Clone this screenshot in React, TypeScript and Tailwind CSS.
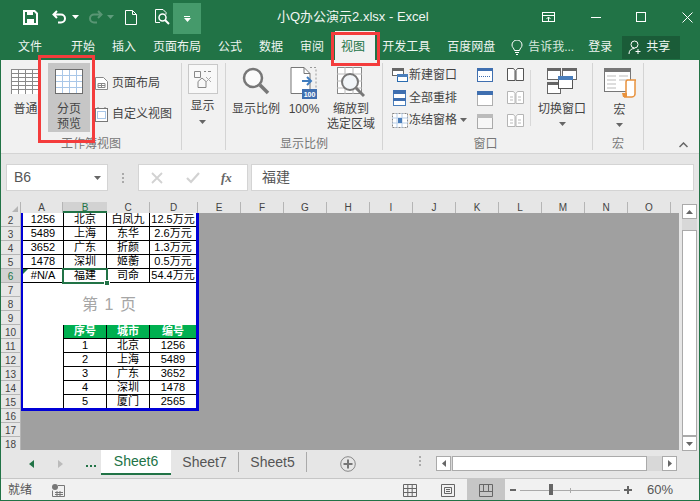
import React from 'react';

const UI = "font-['Liberation_Sans','Noto_Sans_CJK_SC',sans-serif]";

const rowsTop = [
  ['1256', '北京', '白凤九', '12.5万元'],
  ['5489', '上海', '东华', '2.6万元'],
  ['3652', '广东', '折颜', '1.3万元'],
  ['1478', '深圳', '姬蘅', '0.5万元'],
  ['#N/A', '福建', '司命', '54.4万元'],
];

const rowsBottom = [
  ['1', '北京', '1256'],
  ['2', '上海', '5489'],
  ['3', '广东', '3652'],
  ['4', '深圳', '1478'],
  ['5', '厦门', '2565'],
];

const tabs = ['开始', '插入', '页面布局', '公式', '数据', '审阅'];
const restCols = ['E', 'F', 'G', 'H', 'I', 'J', 'K', 'L', 'M', 'N', 'O'];
const rowNums = [2, 3, 4, 5, 6, 7, 8, 9, 10, 11, 12, 13, 14, 15, 16, 17, 18];

const Caret = ({ className = '' }: { className?: string }) => (
  <svg width="7" height="4" viewBox="0 0 7 4" className={className}>
    <path d="M0 0h7L3.5 4z" fill="#666" />
  </svg>
);

const SheetGrid = ({ w, h, line = '#8a8a8a' }: { w: number; h: number; line?: string }) => {
  const v = [];
  const l = [];
  for (let x = 0.5; x <= w; x += w / 4) v.push(x);
  for (let y = 0.5; y <= h; y += h / 6) l.push(y);
  return (
    <svg width={w + 1} height={h + 1}>
      <rect x="0" y="0" width={w + 1} height={h + 1} fill="#fff" />
      {v.map((x) => <line key={x} x1={x} x2={x} y1="0" y2={h + 1} stroke={line} />)}
      {l.map((y) => <line key={y} y1={y} y2={y} x1="0" x2={w + 1} stroke={line} />)}
    </svg>
  );
};

const BreakIcon = () => (
  <svg width="28" height="25" viewBox="0 0 28 25">
    <rect x="0.5" y="0.5" width="27" height="24" fill="#fff" stroke="#6d6d6d" />
    <path d="M0 6.5h28M0 12.5h28M0 18.5h28" stroke="#a9c7e8" />
    <path d="M7.5 0v25M14.5 0v25M21.5 0v25" stroke="#a9c7e8" />
    <path d="M0.5 0.5h27v24h-27z" fill="none" stroke="#6d6d6d" />
  </svg>
);

const WinIcon = ({ kind }: { kind: 'new' | 'all' | 'freeze' }) => {
  if (kind === 'new')
    return (
      <svg width="16" height="14" viewBox="0 0 16 14">
        <rect x="0.5" y="0.5" width="11" height="7" fill="#fff" stroke="#666" />
        <rect x="0" y="0" width="12" height="3" fill="#666" />
        <rect x="5.5" y="6.5" width="10" height="7" fill="#fff" stroke="#2b6cb0" />
        <rect x="5" y="6" width="11" height="3" fill="#4a7ebb" />
      </svg>
    );
  if (kind === 'all')
    return (
      <svg width="13" height="16" viewBox="0 0 13 16">
        <rect x="0.5" y="0.5" width="12" height="15" fill="#fff" stroke="#4a7ebb" />
        <rect x="0" y="0" width="13" height="4" fill="#3f6fb0" />
        <rect x="0" y="8" width="13" height="3" fill="#3f6fb0" />
      </svg>
    );
  return (
    <svg width="16" height="15" viewBox="0 0 16 15">
      <rect x="0.5" y="0.5" width="15" height="14" fill="#fff" stroke="#888" strokeDasharray="2 1" />
      <path d="M0 5h16M0 10h16M5 0v15M10 0v15" stroke="#b9cfe8" />
      <rect x="6" y="5" width="4" height="5" fill="#4a7ebb" />
    </svg>
  );
};

const SmallWin = ({ kind }: { kind: 'a' | 'b' | 'c' }) => (
  <svg width="16" height="15" viewBox="0 0 16 15">
    {kind === 'a' && (
      <>
        <rect x="0.5" y="0.5" width="15" height="13" fill="#fff" stroke="#3f6fb0" />
        <rect x="0" y="0" width="16" height="3" fill="#3f6fb0" />
        <path d="M2 8.5h12" stroke="#3f6fb0" strokeDasharray="1 1" />
      </>
    )}
    {kind === 'b' && (
      <>
        <rect x="0.5" y="1.5" width="15" height="13" fill="#fff" stroke="#666" strokeDasharray="1 1" />
        <rect x="0" y="0" width="16" height="4" fill="#3f6fb0" />
      </>
    )}
    {kind === 'c' && (
      <>
        <rect x="0.5" y="0.5" width="15" height="14" fill="#f7f7f7" stroke="#aaa" />
        <rect x="0" y="0" width="16" height="4" fill="#bbb" />
      </>
    )}
  </svg>
);

const TwoPages = ({ dim = false, mid = false }: { dim?: boolean; mid?: boolean }) => (
  <svg width="17" height="13" viewBox="0 0 17 13">
    <path d="M0.5 0.5h6l1.5 2v10h-7.5z M9 2.5l1.5-2h6v12H9z" fill="#fff" stroke={dim ? '#b5b5b5' : '#555'} />
    {mid && <path d="M3 6h3M11 6h3M3 9h3M11 9h3" stroke="#bbb" />}
  </svg>
);

const MenuTab = ({ label }: { label: string }) => <span className="whitespace-nowrap">{label}</span>;

const BigLabel = ({ children, className = '' }: { children: React.ReactNode; className?: string }) => (
  <div className={`text-[12px] leading-[15px] text-[#444] text-center whitespace-nowrap ${className}`}>{children}</div>
);

const GroupLabel = ({ children, className = '' }: { children: React.ReactNode; className?: string }) => (
  <div className={`h-[16px] shrink-0 leading-[16px] text-[12px] text-[#777] text-center whitespace-nowrap ${className}`}>{children}</div>
);

export default function App() {
  return (
    <div className={`${UI} relative w-[700px] h-[501px] overflow-hidden bg-[#e6e6e6] flex flex-col`}>
      {/* title bar */}
      <div className="h-[34px] shrink-0 bg-[#217346] flex items-center text-white relative">
        <svg width="15" height="15" viewBox="0 0 15 15" className="ml-[23px]">
          <path d="M1 1h10.5L14 3.5V14H1z" fill="none" stroke="#fff" strokeWidth="2" />
          <rect x="4" y="1" width="6" height="4" fill="#fff" />
          <rect x="4" y="9" width="7" height="5" fill="#fff" />
        </svg>
        <svg width="15" height="14" viewBox="0 0 15 14" className="ml-[14px]">
          <path d="M5 1L1.5 4.5 5 8M2 4.5h7a4 4 0 0 1 0 8H6" fill="none" stroke="#fff" strokeWidth="2" />
        </svg>
        <Caret className="ml-[5px] [&>path]:fill-white" />
        <svg width="15" height="14" viewBox="0 0 15 14" className="ml-[9px] opacity-25">
          <path d="M10 1l3.5 3.5L10 8M13 4.5H6a4 4 0 0 0 0 8h3" fill="none" stroke="#fff" strokeWidth="2" />
        </svg>
        <Caret className="ml-[4px] [&>path]:fill-[#5f9c7c]" />
        <svg width="12" height="15" viewBox="0 0 12 15" className="ml-[11px]">
          <path d="M0.5 0.5h7l4 4v10h-11z M7.5 0.5v4h4" fill="none" stroke="#fff" />
        </svg>
        <svg width="16" height="16" viewBox="0 0 16 16" className="ml-[17px]">
          <path d="M9 0.5H1.5v13H6 M9 0.5l3 3v2" fill="none" stroke="#fff" />
          <circle cx="8.5" cy="8.5" r="3.5" fill="none" stroke="#fff" strokeWidth="1.5" />
          <path d="M11 11l4 4" stroke="#fff" strokeWidth="2" />
        </svg>
        <div className="ml-[3px] w-[28px] h-[31px] mt-[3px] bg-[#459a6b] flex flex-col items-center justify-center gap-[1px]">
          <div className="w-[6px] h-px bg-white" />
          <Caret className="[&>path]:fill-white" />
        </div>
        <span className="ml-[76px] text-[13px] text-[#f1f6f3] whitespace-nowrap">小Q办公演示2.xlsx - Excel</span>
        <svg width="14" height="11" viewBox="0 0 14 11" className="ml-[113px]">
          <rect x="0.5" y="0.5" width="12" height="9" fill="none" stroke="#fff" />
          <path d="M0 3.5h13M6.5 9V5M4.5 7l2-2 2 2" stroke="#fff" fill="none" />
        </svg>
        <div className="ml-[35px] w-[10px] h-px bg-white" />
        <div className="ml-[35px] w-[10px] h-[10px] border border-white" />
        <svg width="11" height="11" viewBox="0 0 11 11" className="ml-[36px]">
          <path d="M0.5 0.5l10 10M10.5 0.5l-10 10" stroke="#fff" />
        </svg>
      </div>

      {/* menu tabs */}
      <div className="h-[26px] shrink-0 bg-[#217346] flex items-center text-[12px] text-[#eef5f1] pl-[18px]">
        <span className="mr-[29px]">文件</span>
        <div className="flex items-center gap-[17px]">
          {tabs.map((t) => <MenuTab key={t} label={t} />)}
          <span className="relative z-0 text-[#217346]">
            <span className="absolute -z-10 left-[-6px] right-[-10px] top-[-7px] bottom-[-6px] bg-[#f1f1f1]" />
            视图
          </span>
          <MenuTab label="开发工具" />
          <MenuTab label="百度网盘" />
        </div>
        <svg width="12" height="15" viewBox="0 0 12 15" className="ml-[16px]">
          <path d="M3.5 10.5C3 8 1 7.5 1 5a5 5 0 0 1 10 0c0 2.500-2 3-2.500 5.500zM4 12.500h4M5 14.500h2" fill="none" stroke="#fff" />
        </svg>
        <span className="ml-[5px] whitespace-nowrap text-[#d8e8de]">告诉我...</span>
        <span className="ml-[14px]">登录</span>
        <div className="ml-[10px] w-[58px] h-[23px] bg-[#1a5c38] flex items-center pl-[6px] gap-[3px]">
          <svg width="15" height="15" viewBox="0 0 15 15">
            <circle cx="6.500" cy="4.500" r="3.500" fill="none" stroke="#fff" />
            <path d="M1 14c0-3.500 2-5.500 5.500-5.500M10 9v5M7.500 11.500h5" fill="none" stroke="#fff" />
          </svg>
          <span>共享</span>
        </div>
      </div>

      {/* ribbon */}
      <div className="h-[93px] shrink-0 bg-[#f1f1f1] flex pt-[3px] pl-[1px]">
        {/* 工作簿视图 */}
        <div className="w-[181px] h-[87px] border-r border-[#d4d4d4] flex flex-col">
          <div className="h-[73px] shrink-0 flex">
            <div className="ml-[9px] w-[31px] flex flex-col items-center pt-[6px]">
              <SheetGrid w={28} h={24} />
              <BigLabel className="mt-[8px]">普通</BigLabel>
            </div>
            <div className="ml-[7px] w-[42px] h-[69px] bg-[#c6c6c6] flex flex-col items-center pt-[6px]">
              <BreakIcon />
              <BigLabel className="mt-[8px]">分页<br />预览</BigLabel>
            </div>
            <div className="ml-[5px] flex flex-col text-[12px] text-[#444]">
              <div className="flex items-center h-[20px] mt-[10px] gap-[4px] whitespace-nowrap">
                <svg width="13" height="13" viewBox="0 0 13 13">
                  <path d="M0.5 0.5h8l4 4v8h-12z" fill="#fff" stroke="#888" />
                  <path d="M3 6.500h7v4H3zM6.500 6.500v4M3 8.500h7" fill="none" stroke="#888" />
                </svg>
                页面布局
              </div>
              <div className="flex items-center h-[20px] mt-[11px] gap-[4px] whitespace-nowrap">
                <svg width="13" height="15" viewBox="0 0 13 15">
                  <rect x="0.5" y="1.500" width="12" height="13" fill="#fff" stroke="#777" />
                  <rect x="2.500" y="4.500" width="8" height="7" fill="none" stroke="#a9c7e8" />
                  <path d="M3 0v2M10 0v2" stroke="#777" />
                </svg>
                自定义视图
              </div>
            </div>
          </div>
          <GroupLabel>工作簿视图</GroupLabel>
        </div>
        {/* 显示 */}
        <div className="w-[44px] h-[87px] border-r border-[#d4d4d4] flex flex-col items-center pr-[2px]">
          <div className="w-[30px] h-[30px] mt-[1px] bg-[#f8f8f8] border border-[#c8c8c8] flex items-center justify-center">
            <svg width="20" height="20" viewBox="0 0 20 20">
              <path d="M1.500 2.500h6v6h-6zM11 2.500h2M15 2.500h3M5 12.500l4-3.500 4 3.500v6H5z" fill="none" stroke="#888" />
              <path d="M13 8l5 5M18 8l-5 5" stroke="#aaa" />
            </svg>
          </div>
          <BigLabel className="mt-[5px]">显示</BigLabel>
          <Caret className="mt-[6px]" />
        </div>
        {/* 显示比例 */}
        <div className="w-[157px] h-[87px] border-r border-[#d4d4d4] flex flex-col">
          <div className="h-[73px] shrink-0 flex">
            <div className="ml-[5px] w-[50px] flex flex-col items-center pt-[4px]">
              <svg width="28" height="28" viewBox="0 0 28 28">
                <circle cx="11" cy="11" r="9" fill="#fbfbfb" stroke="#777" strokeWidth="2.500" />
                <path d="M18 18l8 8" stroke="#777" strokeWidth="3.500" />
              </svg>
              <BigLabel className="mt-[7px]">显示比例</BigLabel>
            </div>
            <div className="ml-[6px] w-[34px] flex flex-col items-center pt-[4px]">
              <svg width="28" height="32" viewBox="0 0 28 32">
                <path d="M1 0.500h13l6 6v20H1z" fill="#fff" stroke="#777" />
                <path d="M14 0.500v6h6" fill="none" stroke="#777" />
                <path d="M20 0.500h6v20" fill="none" stroke="#999" strokeDasharray="2 2" />
                <path d="M12 14h9M17 10l4 4-4 4" fill="none" stroke="#3f7cbf" strokeWidth="2" />
                <rect x="12" y="22" width="15" height="10" fill="#3f6fb0" />
                <text x="19.500" y="30" fontSize="7" fontWeight="700" fill="#fff" textAnchor="middle">100</text>
              </svg>
              <BigLabel className="mt-[3px]">100%</BigLabel>
            </div>
            <div className="ml-[5px] w-[50px] flex flex-col items-center pt-[4px]">
              <svg width="28" height="32" viewBox="0 0 28 32">
                <rect x="0.500" y="0.500" width="24" height="26" fill="#fff" stroke="#888" />
                <path d="M0 7h25M0 14h25M0 21h25M8 0v27M16 0v27" stroke="#bbb" />
                <circle cx="13" cy="15" r="8" fill="#f1f5f8" stroke="#777" strokeWidth="2" />
                <path d="M19 21l8 8" stroke="#777" strokeWidth="3" />
              </svg>
              <BigLabel className="mt-[3px]">缩放到<br />选定区域</BigLabel>
            </div>
          </div>
          <GroupLabel>显示比例</GroupLabel>
        </div>
        {/* 窗口 */}
        <div className="w-[210px] h-[87px] border-r border-[#d4d4d4] flex flex-col">
          <div className="h-[73px] shrink-0 flex">
            <div className="ml-[7px] w-[87px] flex flex-col text-[12px] text-[#444] pt-[1px]">
              {[
                { kind: 'new' as const, label: '新建窗口' },
                { kind: 'all' as const, label: '全部重排' },
                { kind: 'freeze' as const, label: '冻结窗格' },
              ].map((r) => (
                <div key={r.label} className="h-[22.500px] flex items-center whitespace-nowrap">
                  <div className="w-[19px] flex justify-center"><WinIcon kind={r.kind} /></div>
                  {r.label}
                  {r.kind === 'freeze' && <Caret className="ml-[3px]" />}
                </div>
              ))}
            </div>
            <div className="w-[16px] flex flex-col gap-[8px] pt-[5px]">
              <SmallWin kind="a" />
              <SmallWin kind="b" />
              <SmallWin kind="c" />
            </div>
            <div className="ml-[14px] w-[17px] flex flex-col gap-[10px] pt-[5px]">
              <TwoPages />
              <TwoPages dim mid />
              <TwoPages dim mid />
            </div>
            <div className="ml-[6px] w-px h-[56px] mt-[7px] bg-[#d8d8d8]" />
            <div className="ml-[7px] w-[48px] flex flex-col items-center pt-[5px]">
              <svg width="30" height="26" viewBox="0 0 30 26">
                <rect x="0.500" y="0.500" width="13" height="11" fill="#fff" stroke="#666" />
                <rect x="0" y="0" width="14" height="3" fill="#666" />
                <rect x="15.500" y="0.500" width="14" height="11" fill="#fff" stroke="#666" />
                <rect x="15" y="0" width="15" height="3" fill="#666" />
                <rect x="0.500" y="14.500" width="13" height="11" fill="#fff" stroke="#666" />
                <rect x="0" y="14" width="14" height="3" fill="#666" />
                <rect x="11.500" y="8.500" width="14" height="12" fill="#fff" stroke="#555" />
                <rect x="11" y="8" width="15" height="4" fill="#4a7ebb" />
              </svg>
              <BigLabel className="mt-[8px]">切换窗口</BigLabel>
              <Caret className="mt-[5px]" />
            </div>
          </div>
          <GroupLabel className="pr-[4px]">窗口</GroupLabel>
        </div>
        {/* 宏 */}
        <div className="w-[51px] h-[87px] border-r border-[#d4d4d4] flex flex-col items-center">
          <div className="h-[73px] shrink-0 flex flex-col items-center pt-[5px] pl-[3px]">
            <svg width="32" height="30" viewBox="0 0 32 30">
              <rect x="0.500" y="0.500" width="26" height="23" fill="#fff" stroke="#777" />
              <rect x="0" y="0" width="27" height="4" fill="#777" />
              <path d="M3 8h9M15 8h9M3 12h9M15 12h9M3 16h9M3 20h9" stroke="#bbb" />
              <path d="M20 29h8c2 0 3-2 3-3V14c0-1 0-2 1-2h-8c-1 0-2 1-2 2v11c0 2-1 4-2 4z" fill="#fff" stroke="#e8913c" strokeWidth="1.500" />
              <path d="M18 25h5v4h-4z" fill="#e8913c" />
            </svg>
            <BigLabel className="mt-[5px]">宏</BigLabel>
            <Caret className="mt-[5px]" />
          </div>
          <GroupLabel>宏</GroupLabel>
        </div>
        <div className="flex-1 relative">
          <svg width="9" height="6" viewBox="0 0 9 6" className="absolute left-[35px] top-[79px]">
            <path d="M0.500 5l4-4 4 4" fill="none" stroke="#666" strokeWidth="1.500" />
          </svg>
        </div>
      </div>
      <div className="h-px shrink-0 bg-[#d4d4d4]" />

      {/* formula bar */}
      <div className="h-[48px] shrink-0 bg-[#e6e6e6] flex pt-[10px] pl-[6px] pr-[6px]">
        <div className="w-[102px] h-[27px] bg-white border border-[#d4d4d4] flex items-center justify-between pl-[7px] pr-[6px] text-[14px] text-[#555]">
          <span>B6</span>
          <Caret />
        </div>
        <div className="w-[30px] flex flex-col items-center justify-center gap-[2px] h-[27px]">
          <div className="w-[2px] h-[2px] bg-[#aaa]" />
          <div className="w-[2px] h-[2px] bg-[#aaa]" />
          <div className="w-[2px] h-[2px] bg-[#aaa]" />
        </div>
        <div className="w-[110px] h-[27px] bg-white border border-[#d4d4d4] flex items-center">
          <svg width="12" height="12" viewBox="0 0 12 12" className="ml-[12px]">
            <path d="M1 1l10 10M11 1L1 11" stroke="#d2d2d2" strokeWidth="1.800" />
          </svg>
          <svg width="14" height="12" viewBox="0 0 14 12" className="ml-[23px]">
            <path d="M1 6l4 4 8-9" fill="none" stroke="#d2d2d2" strokeWidth="2.200" />
          </svg>
          <span className="ml-[21px] font-['Liberation_Serif',serif] italic font-bold text-[13px] text-[#666]">fx</span>
        </div>
        <div className="ml-[3px] flex-1 h-[27px] bg-white border border-[#d4d4d4] flex items-center pl-[10px] text-[14px] text-[#555]">福建</div>
      </div>

      {/* sheet */}
      <div className="flex-1 min-h-0 flex pl-px text-[11px] text-black">
        <div className="flex-1 flex flex-col min-w-0 overflow-hidden">
          {/* column headers */}
          <div className="h-[11px] shrink-0 flex text-[10px] leading-[11px] text-[#444] bg-[#e6e6e6]">
            <div className="w-[20px] border-r border-[#b5b5b5] flex justify-end items-end pr-[2px] pb-[1px]">
              <svg width="6" height="6" viewBox="0 0 6 6"><path d="M6 0v6H0z" fill="#b5b5b5" /></svg>
            </div>
            <div className="w-[42px] text-center border-r border-[#b5b5b5]">A</div>
            <div className="w-[44px] text-center bg-[#d2d2d2] border-b-2 border-[#217346] text-[#217346]">B</div>
            <div className="w-[43px] text-center border-r border-[#b5b5b5]">C</div>
            <div className="w-[48px] text-center border-r border-[#b5b5b5]">D</div>
            {restCols.map((c) => (
              <div key={c} className="w-[43px] shrink-0 text-center border-r border-[#b5b5b5]">{c}</div>
            ))}
          </div>
          <div className="h-[237px] shrink-0 flex">
            {/* row headers */}
            <div className="w-[20px] shrink-0 overflow-hidden bg-[#e6e6e6]">
              {rowNums.map((n) => (
                <div
                  key={n}
                  className={`h-[14px] w-[20px] border-b border-r border-[#b5b5b5] text-center text-[10px] leading-[15px] ${n === 6 ? 'bg-[#d2d2d2] text-[#217346]' : 'text-[#444]'}`}
                >
                  {n}
                </div>
              ))}
            </div>
            {/* grey area with the printed page */}
            <div className="flex-1 bg-[#a0a0a0] min-w-0">
              <div className="w-[178px] h-[198px] bg-white border-l-2 border-r-[3px] border-b-[3px] border-[#0000d6] leading-[13px]">
                {rowsTop.map((r, i) => (
                  <div key={r[0]} className="relative grid grid-cols-[41px_43px_43px_46px] h-[14px] border-b border-black">
                    {r.map((c, j) => (
                      <div key={c} className={`text-center whitespace-nowrap ${j < 3 ? 'border-r border-black' : ''}`}>{c}</div>
                    ))}
                    {i === 4 && (
                      <>
                        <div className="absolute left-0 top-0 w-0 h-0 border-t-[5px] border-r-[5px] border-t-[#217346] border-r-transparent" />
                        <div className="absolute left-[39px] top-[-1px] w-[46px] h-[16px] border-2 border-[#217346]" />
                        <div className="absolute left-[81px] top-[11px] w-[6px] h-[6px] bg-[#217346] border border-white" />
                      </>
                    )}
                  </div>
                ))}
                <div className="h-[42px] flex items-center justify-center text-[16px] text-[#a6a6a6] tracking-[1px]">第 1 页</div>
                <div className="ml-[40px]">
                  <div className="grid grid-cols-[43px_43px_46px] h-[14px] bg-[#00b050] text-white font-bold border-l border-black border-b">
                    {['序号', '城市', '编号'].map((c, j) => (
                      <div key={c} className={`text-center ${j < 2 ? 'border-r border-black' : ''}`}>{c}</div>
                    ))}
                  </div>
                  {rowsBottom.map((r, i) => (
                    <div key={r[0]} className={`grid grid-cols-[43px_43px_46px] border-l border-black ${i < 4 ? 'h-[14px] border-b' : 'h-[13px]'}`}>
                      {r.map((c, j) => (
                        <div key={c} className={`text-center ${j < 2 ? 'border-r border-black' : ''}`}>{c}</div>
                      ))}
                    </div>
                  ))}
                </div>
              </div>
            </div>
          </div>
          {/* sheet tabs */}
          <div className="flex-1 min-h-0 flex text-[14px] text-[#555] bg-[#e6e6e6]">
            <svg width="5" height="8" viewBox="0 0 5 8" className="ml-[28px] mt-[10px]"><path d="M5 0v8L0 4z" fill="#217346" /></svg>
            <svg width="5" height="8" viewBox="0 0 5 8" className="ml-[24px] mt-[10px]"><path d="M0 0v8l5-4z" fill="#bbb" /></svg>
            <div className="ml-[23px] mt-[15px] flex gap-[2px] h-[2px]">
              <div className="w-[2px] h-[2px] bg-[#217346]" />
              <div className="w-[2px] h-[2px] bg-[#217346]" />
              <div className="w-[2px] h-[2px] bg-[#217346]" />
            </div>
            <div className="ml-[5px] w-[70px] h-[25px] bg-white border-b-2 border-[#217346] flex items-center justify-center text-[#217346]">Sheet6</div>
            <div className="w-[68px] flex items-center justify-center border-r border-[#aaa] mt-[2px] h-[20px]">Sheet7</div>
            <div className="w-[68px] flex items-center justify-center border-r border-[#aaa] mt-[2px] h-[20px]">Sheet5</div>
            <svg width="16" height="16" viewBox="0 0 16 16" className="ml-[33px] mt-[6px]">
              <circle cx="8" cy="8" r="7.300" fill="none" stroke="#888" />
              <path d="M8 3.500v9M3.500 8h9" stroke="#777" strokeWidth="2" />
            </svg>
            <div className="ml-[63px] mt-[6px] flex flex-col gap-[2px]">
              <div className="w-[2px] h-[2px] bg-[#aaa]" />
              <div className="w-[2px] h-[2px] bg-[#aaa]" />
              <div className="w-[2px] h-[2px] bg-[#aaa]" />
            </div>
            {/* horizontal scrollbar */}
            <div className="ml-[15px] mt-[6px] w-[241px] h-[15px] flex bg-[#d8d8d8]">
              <div className="w-[15px] bg-white border border-[#aaa] flex items-center justify-center">
                <svg width="4" height="7" viewBox="0 0 4 7"><path d="M4 0v7L0 3.500z" fill="#666" /></svg>
              </div>
              <div className="ml-px w-[195px] bg-white border border-[#aaa]" />
              <div className="ml-auto w-[15px] bg-white border border-[#aaa] flex items-center justify-center">
                <svg width="4" height="7" viewBox="0 0 4 7"><path d="M0 0v7l4-3.500z" fill="#666" /></svg>
              </div>
            </div>
          </div>
        </div>
        {/* vertical scrollbar */}
        <div className="w-[21px] shrink-0 h-[249px] pl-[3px] flex flex-col bg-[#e6e6e6]">
          <div className="h-[2px] -ml-[3px] bg-[#e6e6e6]" />
          <div className="w-[15px] h-[15px] bg-white border border-[#aaa] flex items-center justify-center">
            <svg width="7" height="4" viewBox="0 0 7 4"><path d="M0 4h7L3.500 0z" fill="#666" /></svg>
          </div>
          <div className="w-[15px] h-[11px] bg-[#d8d8d8]" />
          <div className="w-[15px] flex-1 bg-white border border-[#aaa]" />
          <div className="w-[15px] h-[15px] bg-white border border-[#aaa] flex items-center justify-center">
            <svg width="7" height="4" viewBox="0 0 7 4"><path d="M0 0h7L3.500 4z" fill="#666" /></svg>
          </div>
        </div>
      </div>

      {/* status bar */}
      <div className="h-[23px] shrink-0 bg-[#f1f1f1] border-t border-[#c6c6c6] flex items-center text-[12px] text-[#555]">
        <span className="ml-[8px]">就绪</span>
        <svg width="13" height="13" viewBox="0 0 13 13" className="ml-[20px]">
          <circle cx="3" cy="3" r="3" fill="#777" />
          <path d="M6 1.500h6.500v11H0.500V6.500M3 8.500h8M3 10.500h8M5 7v5M8 7v5" fill="none" stroke="#777" />
        </svg>
        <svg width="14" height="13" viewBox="0 0 14 13" className="ml-[338px]">
          <path d="M0.500 0.500h13v12h-13zM0.500 4.500h13M0.500 8.500h13M4.800 0.500v12M9.200 0.500v12" fill="none" stroke="#666" />
        </svg>
        <svg width="14" height="13" viewBox="0 0 14 13" className="ml-[24px]">
          <path d="M0.500 0.500h13v12h-13zM3.500 3.500h7v6h-7zM5 5.500h4M5 7.500h4" fill="none" stroke="#666" />
        </svg>
        <div className="ml-[12px] w-[38px] h-[22px] bg-[#c6c6c6] flex items-center justify-center">
          <svg width="14" height="13" viewBox="0 0 14 13">
            <path d="M0.500 0.500h13v12h-13zM0.500 7.500h13M4.500 0.500v7M9.500 0.500v7" fill="none" stroke="#666" />
          </svg>
        </div>
        <div className="ml-[5px] w-[6px] h-[2px] bg-[#666]" />
        <div className="ml-[4px] w-[100px] h-px bg-[#aaa] relative">
          <div className="absolute left-[29px] top-[-6px] w-[4px] h-[11px] bg-[#666]" />
          <div className="absolute left-[50px] top-[-2px] w-px h-[5px] bg-[#aaa]" />
        </div>
        <svg width="8" height="8" viewBox="0 0 8 8" className="ml-[4px]">
          <path d="M4 0v8M0 4h8" stroke="#666" strokeWidth="2" />
        </svg>
        <span className="ml-[15px] text-[13px]">60%</span>
      </div>

      {/* window edge */}
      <div className="absolute left-0 top-[60px] bottom-0 w-px bg-[#217346]" />
      <div className="absolute right-0 top-[60px] bottom-0 w-px bg-[#217346]" />
      <div className="absolute left-0 right-0 bottom-0 h-px bg-[#217346]" />

      {/* red annotation boxes */}
      <div className="absolute left-[38px] top-[55px] w-[57px] h-[88px] border-[3px] border-[#f43c3c]" />
      <div className="absolute left-[331px] top-[32px] w-[49px] h-[34px] border-[3px] border-[#f43c3c]" />
    </div>
  );
}
